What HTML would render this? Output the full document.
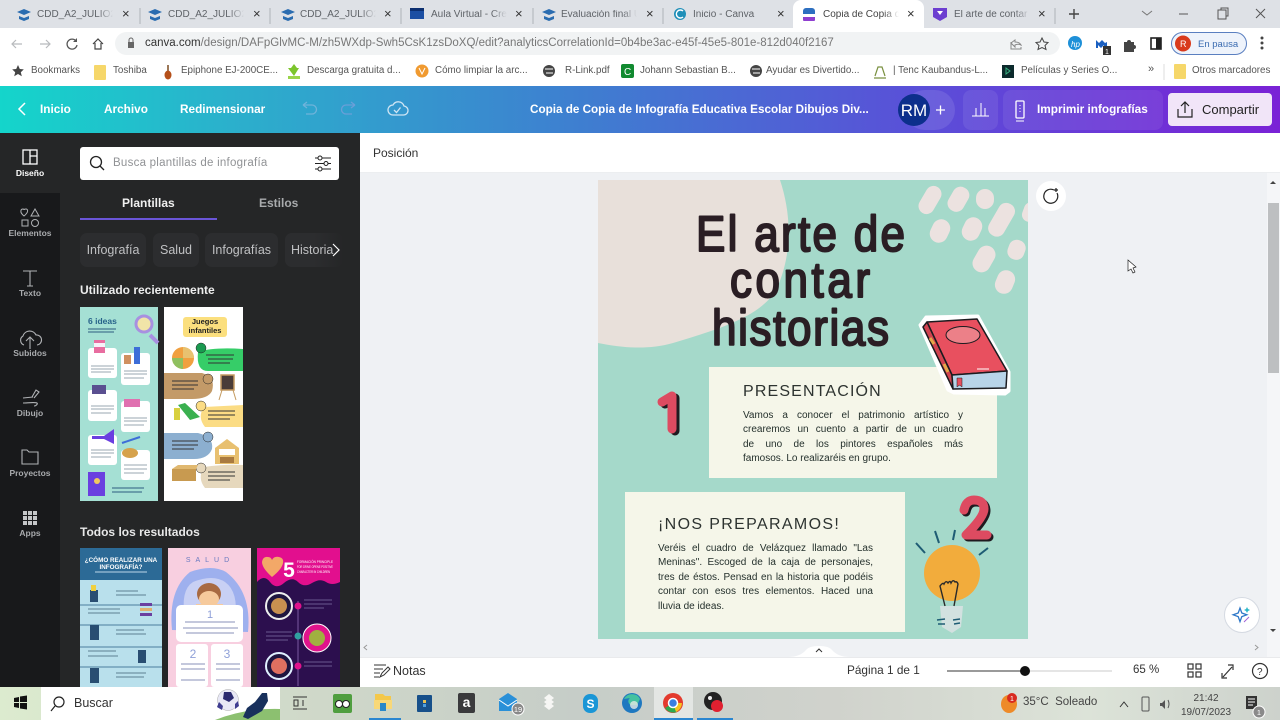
<!DOCTYPE html>
<html lang="es"><head><meta charset="utf-8"><title>Copia de Copia</title>
<style>
*{box-sizing:border-box}
html,body{margin:0;padding:0;width:1280px;height:720px;overflow:hidden;background:#fff;font-family:"Liberation Sans",sans-serif}
.a{position:absolute}
.t{position:absolute;white-space:nowrap;line-height:1}
svg{position:absolute;overflow:visible}
.tab{font-size:10px;color:#5f6368;top:10px;width:76px;overflow:hidden;-webkit-mask-image:linear-gradient(90deg,#000 80%,transparent);mask-image:linear-gradient(90deg,#000 80%,transparent)}
.x{font-size:13px;color:#333;top:7px}
.bm{font-size:9.8px;color:#555;top:66px}
.hd{color:#fff;font-size:11.8px;font-weight:bold;top:104px}
.rl{color:#a9abae;font-size:8.5px;font-weight:bold;width:60px;text-align:center;left:0}
.chip{position:absolute;top:233px;height:34px;border-radius:7px;background:#2c2d2f;color:#c0c1c3;font-size:12.5px;line-height:34px;text-align:center}
.j{position:absolute;color:#24302c;font-size:10px;line-height:14.5px;text-align:justify}
.j span{display:block;white-space:nowrap;text-align:justify;text-align-last:justify;height:14.5px}
.j span.l{text-align-last:left}
</style></head><body>

<!-- chrome tabs -->
<div class="a" style="left:0;top:0;width:1280px;height:28px;background:#dee1e6"></div>
<div class="a" style="left:793px;top:0;width:131px;height:28px;background:#fff;border-radius:8px 8px 0 0"></div>
<svg style="left:0;top:0" width="1280" height="28">
<path d="M140 8v16M270 8v16M401 8v16M533 8v16M663 8v16M1055 8v16" stroke="#aeb2b8"/>
<g fill="#2a6cb0">
<path d="M17 12l7-3 7 3-7 3zM19 16v3l5 2 5-2v-3l-5 2z"/>
<path d="M148 12l7-3 7 3-7 3zM150 16v3l5 2 5-2v-3l-5 2z"/>
<path d="M281 12l7-3 7 3-7 3zM283 16v3l5 2 5-2v-3l-5 2z"/>
<path d="M542 12l7-3 7 3-7 3zM544 16v3l5 2 5-2v-3l-5 2z"/></g>
<rect x="410" y="8" width="14" height="11" fill="#1c4fa3"/><path d="M410 8h14v3h-14z" fill="#0c2f70"/>
<circle cx="680" cy="14" r="6" fill="#1f8fb8"/><path d="M683 11a4 4 0 1 0 0 6" fill="none" stroke="#fff" stroke-width="1.400"/>
<rect x="803" y="8" width="12" height="13" rx="3" fill="#2d6fc0"/><rect x="803" y="14" width="12" height="3" fill="#fff"/><rect x="803" y="17" width="12" height="4" rx="1" fill="#8f3fd0"/>
<path d="M933 8h14v9l-7 4-7-4z" fill="#6d3fd0"/><path d="M937 11l3 4 3-4z" fill="#fff"/>
<path d="M1069 14h10M1074 9v10" stroke="#444" stroke-width="1.400"/>
<path d="M1142 11l5 4 5-4" stroke="#777" fill="none"/>
<path d="M1179 14h9" stroke="#555"/><rect x="1218" y="10" width="8" height="9" fill="none" stroke="#555"/><path d="M1221 10V8h7v8h-2" stroke="#555" fill="none"/>
<path d="M1256 9l9 9M1265 9l-9 9" stroke="#555"/>
</svg>
<span class="t tab" style="left:37px">CDD_A2_JULIO23</span><span class="t x" style="left:122px">×</span>
<span class="t tab" style="left:168px">CDD_A2_JULIO23</span><span class="t x" style="left:253px">×</span>
<span class="t tab" style="left:300px">CDD_A2_JULIO23</span><span class="t x" style="left:384px">×</span>
<span class="t tab" style="left:431px">Aula Virtual - Cre</span><span class="t x" style="left:515px">×</span>
<span class="t tab" style="left:561px">Evaluación final U</span><span class="t x" style="left:646px">×</span>
<span class="t tab" style="left:693px">Inicio - Canva</span><span class="t x" style="left:777px">×</span>
<span class="t tab" style="left:823px;color:#444">Copia de Copia d</span><span class="t x" style="left:907px">×</span>
<span class="t tab" style="left:954px">El arte de contar l</span><span class="t x" style="left:1038px">×</span>

<!-- url bar -->
<div class="a" style="left:0;top:28px;width:1280px;height:58px;background:#fff"></div>
<div class="a" style="left:115px;top:32px;width:945px;height:23px;border-radius:12px;background:#f1f3f4"></div>
<svg style="left:0;top:28px" width="1280" height="30">
<path d="M12 16h10M16 12l-4 4 4 4" stroke="#b8babd" fill="none" stroke-width="1.200"/>
<path d="M40 16h10M46 12l4 4-4 4" stroke="#b8babd" fill="none" stroke-width="1.200"/>
<path d="M76 13a5 5 0 1 0 1 4" stroke="#555" fill="none" stroke-width="1.300"/><path d="M77 10v4h-4" fill="#555"/>
<path d="M93 16l5-5 5 5M95 15v6h6v-6" stroke="#444" fill="none" stroke-width="1.200"/>
<rect x="128" y="14" width="6" height="6" fill="#666"/><path d="M129 14v-2a2 2 0 0 1 4 0v2" stroke="#666" fill="none"/>
<path d="M1011 15l4-3v2c3 0 5 1 6 3-2-1-4-1-6 0v2zM1011 14v7h10v-2" stroke="#888" fill="none"/>
<path d="M1042 10l2 4 4 .5-3 3 1 4-4-2-4 2 1-4-3-3 4-.5z" stroke="#444" fill="none"/>
<circle cx="1075" cy="15" r="7" fill="#1e90d8"/><text x="1071" y="19" font-size="8" font-style="italic" fill="#fff" font-family="Liberation Sans">hp</text>
<path d="M1096 20v-8l3 3 3-3 3 3 2-1v6h-3v-3l-3 3-3-3v3z" fill="#1a5fc0"/><rect x="1103" y="18" width="8" height="9" fill="#333"/><text x="1105" y="26" font-size="7" fill="#fff" font-family="Liberation Sans">1</text>
<path d="M1124 14h3a2 2 0 0 1 4 0h3v3a2 2 0 0 1 0 4v3h-10z" fill="#444"/>
<rect x="1151" y="10" width="10" height="11" fill="none" stroke="#222" stroke-width="1.600"/><rect x="1156" y="10" width="5" height="11" fill="#222"/>
<rect x="1171.500" y="4.500" width="75" height="22" rx="11" fill="#eef3fb" stroke="#5a7fc0"/>
<circle cx="1183" cy="15.500" r="8" fill="#d93a1c"/><text x="1180" y="19" font-size="9" fill="#fff" font-family="Liberation Sans">R</text>
<text x="1198" y="19" font-size="9.500" fill="#3a6bb0" font-family="Liberation Sans">En pausa</text>
<circle cx="1262" cy="10" r="1.500" fill="#444"/><circle cx="1262" cy="15" r="1.500" fill="#444"/><circle cx="1262" cy="20" r="1.500" fill="#444"/>
</svg>
<span class="t" style="left:145px;top:38px;font-size:11.500px;color:#777"><span style="color:#333">canva.com</span>/design/DAFpGlvMC-M/zh5WXdp-Swh5CsK1zsDoXQ/edit?analyticsCorrelationId=0b4be3ac-e45f-45e5-801e-812d040f2167</span>

<!-- bookmarks -->
<svg style="left:0;top:58px" width="1280" height="28">
<path d="M18 7l1.800 4 4 .4-3 2.800 1 4-3.800-2.200-3.800 2.200 1-4-3-2.800 4-.4z" fill="#444"/>
<rect x="94" y="7" width="12" height="15" rx="1" fill="#f6d76a"/>
<path d="M168 7v6" stroke="#7a4a20" stroke-width="1.500"/><ellipse cx="168" cy="17" rx="3.500" ry="4.500" fill="#b5501a"/>
<path d="M294 6l3 4h2l-5 8-6-8h3z" fill="#7cc52c"/><path d="M288 18h12v3h-12z" fill="#9ad54a"/>
<circle cx="422" cy="13" r="6.500" fill="#f09a30"/><path d="M419 10l3 6 3-6" stroke="#fff" fill="none"/>
<circle cx="549" cy="13" r="6" fill="#444"/><path d="M545 11h8M546 15h7" stroke="#fff"/>
<rect x="621" y="6" width="13" height="14" rx="2" fill="#118a30"/><text x="624" y="17" font-size="10" fill="#fff" font-family="Liberation Sans">C</text>
<circle cx="756" cy="13" r="6" fill="#444"/><path d="M752 11h8M753 15h7" stroke="#fff"/>
<path d="M875 18l3-9h4l3 9M874 20h12" stroke="#7a9040" fill="none" stroke-width="1.200"/>
<rect x="1002" y="7" width="12" height="13" fill="#0c2a2c"/><path d="M1006 10l4 3-4 3z" fill="none" stroke="#39b080"/>
<path d="M1164 6v16" stroke="#ddd"/>
<rect x="1174" y="6" width="12" height="15" rx="1" fill="#f6d76a"/>
</svg>
<span class="t bm" style="left:31px">Bookmarks</span><span class="t bm" style="left:113px">Toshiba</span>
<span class="t bm" style="left:181px">Epiphone EJ-200CE...</span><span class="t bm" style="left:307px">Descarga gratuita d...</span>
<span class="t bm" style="left:435px">Cómo limpiar la arc...</span><span class="t bm" style="left:565px">R-Link.pdf</span>
<span class="t bm" style="left:640px">Johann Sebastian B...</span><span class="t bm" style="left:766px">Ayudar es Divertido...</span>
<span class="t bm" style="left:893px">| Tenc Kaubandus-L...</span><span class="t bm" style="left:1021px">Películas y Series O...</span>
<span class="t bm" style="left:1148px;font-size:11px;top:64px">»</span><span class="t bm" style="left:1192px">Otros marcadores</span>

<!-- canva header -->
<div class="a" style="left:0;top:86px;width:1280px;height:47px;background:linear-gradient(90deg,#14d5cb 0%,#2bb0cc 18%,#3e7fd0 45%,#5a4fd8 72%,#7a22d6 100%)"></div>
<svg style="left:0;top:86px" width="1280" height="47">
<path d="M25 17l-6 6 6 6" stroke="#fff" fill="none" stroke-width="1.500"/>
<path d="M303 19l4-3M303 19l4 3M303 19h9a4.500 4.500 0 0 1 0 9h-6" stroke="#6fb3da" fill="none" stroke-width="1.300"/>
<path d="M355 19l-4-3M355 19l-4 3M355 19h-9a4.500 4.500 0 0 0 0 9h6" stroke="#6a9fd8" fill="none" stroke-width="1.300"/>
<path d="M393 29a5 5 0 0 1 0-10 6 6 0 0 1 11 1 4.500 4.500 0 0 1-1 9z" stroke="#cfe5f4" fill="none" stroke-width="1.300"/><path d="M394 24l2.500 2.500 4-5" stroke="#cfe5f4" fill="none" stroke-width="1.300"/>
<rect x="905" y="4" width="50" height="40" rx="20" fill="#fff" opacity=".1"/><rect x="963" y="4" width="35" height="40" rx="8" fill="#fff" opacity=".08"/><rect x="1003" y="4" width="160" height="40" rx="8" fill="#fff" opacity=".07"/>
<circle cx="914" cy="24" r="16" fill="#0c2f8c"/>
<text x="914" y="30" font-size="17" fill="#fff" text-anchor="middle" font-family="Liberation Sans">RM</text>
<path d="M936 24h9M940.500 19.500v9" stroke="#fff" stroke-width="1.300"/>
<path d="M972 30h17M976 30v-8M981 30V17M985 30v-8" stroke="#fff" fill="none"/>
<rect x="1016" y="15" width="8" height="17" rx="1" fill="none" stroke="#fff" stroke-width="1.300"/><path d="M1020 19v1M1020 22v1M1020 25v1M1016 35h8" stroke="#fff"/>
</svg>
<span class="t hd" style="left:40px">Inicio</span><span class="t hd" style="left:104px">Archivo</span><span class="t hd" style="left:180px">Redimensionar</span>
<span class="t hd" style="left:530px;font-size:11.700px">Copia de Copia de Infografía Educativa Escolar Dibujos Div...</span>
<span class="t hd" style="left:1037px">Imprimir infografías</span>
<div class="a" style="left:1168px;top:93px;width:104px;height:33px;border-radius:4px;background:#f1e5f8"></div>
<svg style="left:1176px;top:100px" width="20" height="20"><path d="M2 9v8h14V9M9 13V2M5 6l4-4 4 4" stroke="#222" fill="none" stroke-width="1.200"/></svg>
<span class="t" style="left:1202px;top:103px;font-size:13px;color:#222">Compartir</span>

<!-- left rail + panel -->
<div class="a" style="left:0;top:133px;width:60px;height:554px;background:#18191b"></div>
<div class="a" style="left:60px;top:133px;width:300px;height:554px;background:#252627"></div>
<div class="a" style="left:0;top:133px;width:60px;height:60px;background:#252627"></div>
<svg style="left:0;top:133px" width="60" height="420">
<g stroke="#fff" fill="none" stroke-width="1.300"><rect x="23" y="17" width="14" height="14"/><path d="M30 17v14M30 23h7"/></g>
<g stroke="#b0b2b5" fill="none" stroke-width="1"><path d="M25 85c-5-4-3-7-1-7 1 0 1 1 1 1s0-1 2-1c2 0 3 3-2 7z" transform="translate(-1,-2)"/><path d="M35 76l4 7h-8z"/><rect x="22" y="87" width="6" height="6"/><circle cx="35" cy="90" r="3.500"/></g>
<path d="M23 138h14M30 138v15M27 153h6" stroke="#b0b2b5" fill="none" stroke-width="1.100"/>
<path d="M24 212a5 5 0 0 1-1-9 7 7 0 0 1 13-1 5 5 0 0 1 1 10M30 216v-11M26 208l4-4 4 4" stroke="#b0b2b5" fill="none" stroke-width="1.100"/>
<path d="M23 270c4 0 12-1 14 0 1 1-1 3-3 3M23 265l10-1M32 264l4-7 3 2-5 6" stroke="#b0b2b5" fill="none" stroke-width="1.100"/>
<path d="M22 331v-14h5l2 2h9v12z" stroke="#b0b2b5" fill="none" stroke-width="1.100"/>
<g fill="#c4c6c8"><rect x="23" y="378" width="4" height="4"/><rect x="28" y="378" width="4" height="4"/><rect x="33" y="378" width="4" height="4"/><rect x="23" y="383" width="4" height="4"/><rect x="28" y="383" width="4" height="4"/><rect x="33" y="383" width="4" height="4"/><rect x="23" y="388" width="4" height="4"/><rect x="28" y="388" width="4" height="4"/><rect x="33" y="388" width="4" height="4"/></g>
</svg>
<span class="t rl" style="top:169px;color:#fff">Diseño</span><span class="t rl" style="top:229px">Elementos</span><span class="t rl" style="top:289px">Texto</span><span class="t rl" style="top:349px">Subidos</span><span class="t rl" style="top:409px">Dibujo</span><span class="t rl" style="top:469px">Proyectos</span><span class="t rl" style="top:529px">Apps</span>

<div class="a" style="left:80px;top:147px;width:259px;height:33px;border-radius:3px;background:#fff"></div>
<svg style="left:89px;top:155px" width="20" height="20"><circle cx="7" cy="7" r="5.500" stroke="#222" fill="none" stroke-width="1.300"/><path d="M11 11l4 4" stroke="#222" stroke-width="1.300"/></svg>
<span class="t" style="left:113px;top:158px;font-size:11.500px;color:#909295;letter-spacing:.25px">Busca plantillas de infografía</span>
<svg style="left:314px;top:155px" width="18" height="18"><path d="M1 3h16M1 8.500h16M1 14h16" stroke="#222"/><circle cx="6" cy="3" r="2" fill="#fff" stroke="#222"/><circle cx="12" cy="8.500" r="2" fill="#fff" stroke="#222"/><circle cx="6" cy="14" r="2" fill="#fff" stroke="#222"/></svg>
<span class="t" style="left:122px;top:197px;font-size:12px;font-weight:bold;color:#f0f0f0">Plantillas</span>
<span class="t" style="left:259px;top:197px;font-size:12px;font-weight:bold;color:#a9abad">Estilos</span>
<div class="a" style="left:80px;top:218px;width:137px;height:2px;background:#6a55d8"></div>
<div class="chip" style="left:80px;width:66px">Infografía</div>
<div class="chip" style="left:153px;width:46px">Salud</div>
<div class="chip" style="left:205px;width:73px">Infografías</div>
<div class="chip" style="left:285px;width:58px;text-align:left;padding-left:6px;overflow:hidden;background:linear-gradient(90deg,#2c2d2f 50%,#252627)">Historia</div>
<svg style="left:331px;top:243px" width="10" height="14"><path d="M2 1l6 6-6 6" stroke="#fff" fill="none" stroke-width="1.200"/></svg>
<span class="t" style="left:80px;top:284px;font-size:12px;font-weight:bold;color:#eee">Utilizado recientemente</span>

<!-- thumbs recent -->
<svg style="left:0;top:0" width="360" height="720">
<rect x="80" y="307" width="78" height="194" fill="#a5e0d4"/>
<text x="88" y="324" font-size="8.500" font-weight="bold" fill="#27628a" font-family="Liberation Sans">6 ideas</text>
<path d="M88 329h28M88 332h26" stroke="#2d5d80" stroke-width="1"/>
<path d="M150 335l8 8" stroke="#a890e0" stroke-width="4"/>
<circle cx="144" cy="324" r="8" fill="#f1e4a8" stroke="#a890e0" stroke-width="3"/>
<g fill="#fff"><rect x="88" y="348" width="29" height="30" rx="3"/><rect x="121" y="353" width="29" height="32" rx="3"/><rect x="88" y="390" width="29" height="31" rx="3"/><rect x="121" y="401" width="29" height="31" rx="3"/><rect x="88" y="435" width="29" height="30" rx="3"/><rect x="121" y="450" width="29" height="30" rx="3"/></g>
<rect x="94" y="340" width="11" height="13" fill="#e86da0"/><rect x="94" y="343" width="11" height="4" fill="#f8f0f8"/>
<rect x="124" y="355" width="7" height="9" fill="#d09060"/><rect x="134" y="347" width="6" height="17" fill="#3d6ed8"/>
<rect x="92" y="385" width="14" height="9" fill="#5a4f90"/><rect x="124" y="399" width="16" height="8" fill="#e070b0"/>
<path d="M92 436h12l10-7v15l-10-5H92z" fill="#6a3fe0"/>
<path d="M122 443l18-6" stroke="#3d6ed8" stroke-width="2"/><ellipse cx="130" cy="453" rx="8" ry="5" fill="#d6a24c"/>
<rect x="88" y="472" width="17" height="24" fill="#6a3fe0"/><circle cx="97" cy="481" r="3" fill="#f0c860"/>
<path d="M112 488h32M112 492h30" stroke="#2d5d80"/>
<g stroke="#9aa7b0" stroke-width="1"><path d="M91 366h23M91 369h23M91 372h20M124 371h23M124 374h23M124 378h20M91 406h23M91 409h23M91 413h20M124 418h23M124 421h23M124 425h20M91 450h23M91 453h23M91 457h20M124 465h23M124 469h23M124 473h20"/></g>

<rect x="164" y="307" width="79" height="194" fill="#fff"/>
<rect x="183" y="317" width="44" height="20" rx="3" fill="#fbdf7e"/>
<text x="205" y="324" font-size="7.500" text-anchor="middle" font-weight="bold" fill="#222" font-family="Liberation Sans">Juegos</text>
<text x="205" y="333" font-size="7.500" text-anchor="middle" font-weight="bold" fill="#222" font-family="Liberation Sans">infantiles</text>
<path d="M198 352q15-5 45-3v22h-35q-12 0-10-19z" fill="#36cd68"/>
<path d="M164 373h38q14 4 10 18-4 8-20 8h-28z" fill="#c39a68"/>
<path d="M204 407l39-2v22h-38q-8-10-1-20z" fill="#fbdc84"/>
<path d="M164 433h34q16 4 14 16-4 10-18 10h-30z" fill="#8cafd0"/>
<path d="M204 467q20-3 39-2v23h-38q-8-10-1-21z" fill="#e6d8bd"/>
<circle cx="183" cy="358" r="11" fill="#f0a040"/><path d="M183 347a11 11 0 0 1 11 11l-11 0z" fill="#e8c270"/><path d="M172 358a11 11 0 0 0 11 11v-11z" fill="#8fc060"/>
<circle cx="201" cy="348" r="5" fill="#1a9a50" stroke="#222" stroke-width=".5"/><circle cx="208" cy="379" r="5" fill="#c39a68" stroke="#222" stroke-width=".5"/><circle cx="201" cy="406" r="5" fill="#fbdc84" stroke="#222" stroke-width=".5"/><circle cx="208" cy="437" r="5" fill="#8cafd0" stroke="#222" stroke-width=".5"/><circle cx="201" cy="468" r="5" fill="#e6d8bd" stroke="#222" stroke-width=".5"/>
<rect x="221" y="375" width="13" height="15" fill="#4a3c38" stroke="#c49a60" stroke-width="1.500"/><path d="M219 400l3-10M236 400l-3-10" stroke="#c49a60"/>
<path d="M178 405l7-2 15 14-10 3z" fill="#3ab050"/><rect x="174" y="408" width="6" height="12" fill="#d8d040"/>
<path d="M215 448l12-9 12 9v16h-24z" fill="#e8c070"/><rect x="219" y="449" width="16" height="6" fill="#fff"/><rect x="220" y="457" width="14" height="6" fill="#a97a40"/>
<path d="M172 469h24v12h-24z" fill="#c89a50"/><path d="M172 469l6-4h20l-2 4z" fill="#e0b870"/>
<g stroke="#333" stroke-width="1"><path d="M206 355h28M208 359h25M208 363h22M172 381h26M172 385h26M172 389h22M208 411h27M208 415h27M208 419h22M172 441h26M172 445h26M172 449h22M208 472h27M208 476h27M208 480h22"/></g>

<!-- results -->
<rect x="80" y="548" width="82" height="139" fill="#b9e0ec"/><rect x="80" y="548" width="82" height="32" fill="#2c6a96"/>
<text x="121" y="562" font-size="6.300" font-weight="bold" fill="#fff" text-anchor="middle" font-family="Liberation Sans">¿CÓMO REALIZAR UNA</text>
<text x="121" y="569" font-size="6.300" font-weight="bold" fill="#fff" text-anchor="middle" font-family="Liberation Sans">INFOGRAFÍA?</text>
<path d="M95 572h52" stroke="#bcd6e8"/>
<g stroke="#4a7e9e"><path d="M80 605h82M80 625h82M80 647h82M80 667h82"/></g>
<g fill="#294e72"><rect x="90" y="590" width="8" height="12"/><rect x="90" y="625" width="9" height="15"/><rect x="90" y="668" width="9" height="15"/><rect x="138" y="650" width="8" height="13"/></g>
<rect x="140" y="603" width="12" height="3" fill="#6a3fa0"/><rect x="140" y="608" width="12" height="3" fill="#e0b070"/><rect x="140" y="613" width="12" height="3" fill="#6a3fa0"/>
<path d="M91 585h5v6h-5z" fill="#f0d040"/>
<g stroke="#5d7f92"><path d="M116 591h22M116 595h30M88 609h32M88 613h32M116 630h28M116 634h30M88 651h28M88 656h30M116 673h30M116 677h28"/></g>

<rect x="168" y="548" width="83" height="139" fill="#f8cfe0"/>
<text x="210" y="562" font-size="7" fill="#6a7ac0" text-anchor="middle" letter-spacing="5" font-family="Liberation Sans">SALUD</text>
<path d="M172 630q-4-40 18-58 22-8 36 0 26 20 22 60z" fill="#9eb0ee"/>
<path d="M185 620q-5-30 8-38 20-8 32 0 14 10 10 38z" fill="#c8d0f4"/>
<ellipse cx="209" cy="594" rx="12" ry="11" fill="#a86a42"/><ellipse cx="209" cy="599" rx="10" ry="8" fill="#f6ca9c"/><rect x="196" y="604" width="27" height="4" fill="#f6ca9c"/>
<rect x="176" y="605" width="67" height="37" rx="5" fill="#fff"/><rect x="176" y="644" width="32" height="43" rx="3" fill="#fff"/><rect x="211" y="644" width="32" height="43" rx="3" fill="#fff"/>
<text x="210" y="618" font-size="11" fill="#8fa0d8" text-anchor="middle" font-family="Liberation Sans">1</text>
<text x="193" y="658" font-size="12" fill="#8fa0d8" text-anchor="middle" font-family="Liberation Sans">2</text>
<text x="227" y="658" font-size="12" fill="#8fa0d8" text-anchor="middle" font-family="Liberation Sans">3</text>
<g stroke="#8a90b8"><path d="M185 622h50M183 628h55M186 633h48M181 664h24M181 669h24M216 664h24M216 669h24M181 680h24M216 680h24"/></g>

<rect x="257" y="548" width="83" height="139" fill="#2c0f4e"/>
<path d="M257 548h83v34q-8 4-14 0t-14 1-14-1-14 1-14-1-13 0z" fill="#e20f8e"/>
<path d="M272 577Q262 568 262 562Q263 556 268 557Q271 557 272 560Q274 556 279 557Q284 558 283 563Q282 569 272 577Z" fill="#f3a868"/>
<text x="289" y="577" font-size="21" font-weight="bold" fill="#fff" text-anchor="middle" font-family="Liberation Sans">5</text>
<text x="297" y="563" font-size="4" fill="#fff" font-family="Liberation Sans" textLength="36" lengthAdjust="spacingAndGlyphs">FORMACIÓN PRINCIPLE</text>
<text x="297" y="568" font-size="4" fill="#fff" font-family="Liberation Sans" textLength="36" lengthAdjust="spacingAndGlyphs">FOR DRIVE OPENE POSITIVE</text>
<text x="297" y="573" font-size="4" fill="#fff" font-family="Liberation Sans" textLength="33" lengthAdjust="spacingAndGlyphs">CHARACTER IN CHILDREN</text>
<path d="M298 601v85" stroke="#7a5aa0"/>
<circle cx="279" cy="606" r="13" fill="#1f1540" stroke="#eee" stroke-width="2"/><circle cx="279" cy="606" r="8" fill="#c89050"/>
<circle cx="317" cy="638" r="14" fill="#e0138c" stroke="#fff" stroke-width="1"/><circle cx="317" cy="638" r="8" fill="#a0b040"/>
<circle cx="279" cy="666" r="13" fill="#1f1540" stroke="#e0f0ff" stroke-width="2"/><circle cx="279" cy="666" r="8" fill="#e07060"/>
<circle cx="298" cy="606" r="3.500" fill="#e0138c"/><circle cx="298" cy="636" r="3.500" fill="#30a0a0"/><circle cx="298" cy="666" r="3.500" fill="#e0138c"/>
<g stroke="#6a5a90"><path d="M304 600h28M304 604h28M304 608h20M266 632h26M266 636h26M266 640h22M304 662h28M304 666h28"/></g>
</svg>
<span class="t" style="left:80px;top:526px;font-size:12px;font-weight:bold;color:#e8e8e8">Todos los resultados</span>

<!-- collapse handle -->
<svg style="left:359px;top:380px" width="12" height="60"><path d="M0 0q0 8 6 12 5 4 5 10v18q0 6-5 9-6 4-6 11z" fill="#252627"/><path d="M6.500 26l-3 3 3 3" stroke="#bbb" fill="none"/></svg>

<!-- position bar -->
<div class="a" style="left:360px;top:133px;width:920px;height:40px;background:#fff;border-bottom:1px solid #eceef0"></div>
<span class="t" style="left:373px;top:147px;font-size:12px;color:#333">Posición</span>

<!-- canvas bg -->
<div class="a" style="left:360px;top:173px;width:920px;height:484px;background:#eff1f4"></div>
<div class="a" style="left:598px;top:180px;width:430px;height:459px;background:#a5d9ca"></div>
<svg style="left:598px;top:180px;overflow:hidden" width="430" height="459">
<path d="M0 0H182C192 30 196 70 179 108C165 135 125 148 75 163C50 170 25 168 0 163Z" fill="#e8e0da"/>
<g fill="#ece2e0"><rect x="-8" y="-15" width="16" height="30" rx="8" transform="translate(332,20) rotate(30)"/><rect x="-8" y="-13" width="17" height="26" rx="8" transform="translate(360,19) rotate(30)"/><rect x="-9" y="-10" width="18" height="20" rx="9" transform="translate(387,19)"/><rect x="-9" y="-18" width="17" height="36" rx="8" transform="translate(404,40) rotate(30)"/><rect x="-9" y="-12" width="18" height="24" rx="9" transform="translate(342,51) rotate(25)"/><rect x="-9" y="-12" width="18" height="24" rx="9" transform="translate(374,49) rotate(25)"/><rect x="-9" y="-14" width="18" height="28" rx="9" transform="translate(386,79) rotate(30)"/><rect x="-9" y="-10" width="17" height="20" rx="8" transform="translate(419,70) rotate(20)"/><rect x="-9" y="-12" width="18" height="24" rx="9" transform="translate(407,102) rotate(22)"/><rect x="-7" y="-10" width="14" height="20" rx="7" transform="translate(432,32) rotate(20)"/></g>
</svg>

<div class="a" style="left:709px;top:367px;width:288px;height:111px;background:#f5f6e9"></div>
<div class="a" style="left:625px;top:492px;width:280px;height:140px;background:#f5f6e9"></div>
<span class="t" style="left:743px;top:384px;font-size:16px;letter-spacing:1.150px;color:#2d3330">PRESENTACIÓN</span>
<div class="j" style="left:743px;top:408.500px;width:220px">
<span>Vamos a conocer el patrimonio artístico y</span><span>crearemos un cuento a partir de un cuadro</span><span>de uno de los pintores españoles más</span><span class="l">famosos. Lo realizaréis en grupo.</span></div>
<span class="t" style="left:658px;top:517px;font-size:16px;letter-spacing:1.350px;color:#2d3330">¡NOS PREPARAMOS!</span>
<div class="j" style="left:658px;top:541.500px;width:215px;line-height:14.300px">
<span>Veréis el cuadro de Velázquez llamado "Las</span><span>Meninas". Escoged de la caja de personajes,</span><span>tres de éstos. Pensad en la historia que podéis</span><span>contar con esos tres elementos. Haced una</span><span class="l">lluvia de ideas.</span></div>

<svg style="left:0;top:0" width="1280" height="720">
<!-- title -->
<g font-family="Liberation Sans" font-size="44" fill="#2a1e24" stroke="#2a1e24" stroke-width="1.800" stroke-linejoin="round" stroke-linecap="round">
<text transform="translate(696 251) scale(1 1.140)" x="0" y="0" textLength="209" lengthAdjust="spacing">El arte de</text>
<text transform="translate(730 297) scale(1 1.140)" x="0" y="0" textLength="140" lengthAdjust="spacing">contar</text>
<text transform="translate(712 345) scale(1 1.140)" x="0" y="0" textLength="177" lengthAdjust="spacing">historias</text>
</g>
<!-- book -->
<path d="M920 325L926 317L978 316L1009 372L1009 391L1005 394L954 393L948 390Z" fill="#fff" stroke="#fff" stroke-width="3" stroke-linejoin="round"/>
<path d="M927 322L977 319L1007 371L952 375Z" fill="#e8505f" stroke="#1b1b1f" stroke-width="1.500" stroke-linejoin="round"/>
<path d="M923 327L927 322L952 375L953 389Z" fill="#d14350" stroke="#1b1b1f" stroke-width="1.500" stroke-linejoin="round"/>
<path d="M930 338l4 6M944 364l4 8" stroke="#e4a848" stroke-width="3"/>
<ellipse cx="963" cy="335" rx="17" ry="8.500" fill="#ec8088" stroke="#1b1b1f" stroke-width="1"/>
<path d="M952 375L1007 371L1006 388L953 389Z" fill="#b8d4e8" stroke="#1b1b1f" stroke-width="1.500" stroke-linejoin="round"/>
<path d="M957 378h5v9l-2.500-2-2.500 2z" fill="#e8505f" stroke="#1b1b1f" stroke-width=".5"/>
<path d="M977 369h12" stroke="#fff"/>

<!-- 1 -->
<g fill="none" stroke-width="9" stroke-linecap="round" stroke-linejoin="round">
<path d="M665 404L675 398V431" stroke="#1f1a20"/>
<path d="M662 402L672 396V429" stroke="#dd4b61"/>
<!-- 2 -->
<path d="M966 512Q968 502 976 502Q986 502 986 511Q986 519 968 537H989" stroke="#1f1a20"/>
<path d="M964 510Q966 500 974 500Q984 500 984 509Q984 517 966 535H987" stroke="#dd4b61"/>
</g>
<!-- bulb -->
<g stroke="#1e5c74" stroke-width="2" fill="none"><path d="M916 543l9 10M935 531l4 12M955 530l-2 10M988 548l-9 7"/></g>
<circle cx="952" cy="573" r="28" fill="#f2ac3c"/>
<path d="M940 606h23l-2 21-9 6-10-6z" fill="#d2e1e0"/>
<path d="M945 606l-5-20q3-4 4-2 2-4 4-1 2-3 3 0 2-4 4-1 2-1 3 2l-4 22" stroke="#2a2a2a" stroke-width="1.400" fill="none"/>
<path d="M937 620l8-1M953 620l7-1M938 624l7 0M954 624l6-1" stroke="#1e5c74" stroke-width="1.400"/>
<!-- rotate btn -->
<circle cx="1051" cy="196" r="15" fill="#fff"/>
<path d="M1057 193a7 7 0 1 1-3-3M1054 190h4M1056 188v4" stroke="#222" fill="none" stroke-width="1.200"/>
<!-- cursor -->
<path d="M1128 260v11l3-2 2 4 2-1-2-4 3-1z" fill="#fff" stroke="#222" stroke-width=".7"/>
<!-- scrollbar -->
<rect x="1267" y="173" width="13" height="484" fill="#f5f6f8"/>
<rect x="1268" y="203" width="11" height="170" fill="#bdbfc1"/>
<path d="M1270 184l3-3 3 3" fill="#444"/><path d="M1270 629l3 3 3-3" fill="#444"/>
<path d="M367 645l-3 2.500 3 2.500M1255 645l3 2.500-3 2.500" stroke="#999" fill="none"/>
<!-- magic button -->
<circle cx="1242" cy="615" r="17.500" fill="#fff" stroke="#d5dae2"/>
<path d="M1240 608l1.800 5 5 1.800-5 1.800-1.800 5-1.800-5-5-1.800 5-1.800z" fill="none" stroke="#2d77c8" stroke-width="1.300"/>
<path d="M1247 607l1 2 2 1-2 1-1 2-1-2-2-1 2-1z" fill="#2db8c8"/>
<path d="M1249 617l-5 5" stroke="#a060d8"/>
<!-- pager tab -->
<path d="M788 657q12 0 18-7 3-4 13-4t13 4q6 7 18 7z" fill="#fff"/>
<path d="M816 652l3-3 3 3" stroke="#333" fill="none"/>
</svg>

<!-- footer -->
<div class="a" style="left:360px;top:657px;width:920px;height:30px;background:#fff;border-top:1px solid #e9eaec"></div>
<svg style="left:360px;top:657px" width="920" height="30">
<path d="M14 8h12M14 12h9M14 16h6M14 20h5" stroke="#333" stroke-width="1.100"/><path d="M20 20l2-4 6-6 2 2-6 6z" fill="none" stroke="#333"/>
<path d="M587 14h78" stroke="#9a9a9a" stroke-width="2"/><path d="M665 14h87" stroke="#e5e5e5" stroke-width="2"/>
<circle cx="665" cy="14" r="5" fill="#111"/>
<g fill="none" stroke="#333" stroke-width="1.200"><rect x="828" y="7" width="5" height="5"/><rect x="836" y="7" width="5" height="5"/><rect x="828" y="15" width="5" height="5"/><rect x="836" y="15" width="5" height="5"/><path d="M863 20l9-10M868 8h5v5M862 16v5h5"/><circle cx="900" cy="14" r="7.500"/></g>
<text x="897" y="18" font-size="10" fill="#333" font-family="Liberation Sans">?</text>
</svg>
<span class="t" style="left:393px;top:665px;font-size:12.500px;color:#333">Notas</span>
<span class="t" style="left:847px;top:665px;font-size:11.800px;color:#333">Página 1 de 1</span>
<span class="t" style="left:1133px;top:665px;font-size:11.500px;color:#333">65 %</span>

<!-- taskbar -->
<div class="a" style="left:0;top:687px;width:1280px;height:33px;background:linear-gradient(90deg,#dcebcf 0%,#cfd8c9 25%,#c6cdc8 45%,#d0d2cc 65%,#dce3d8 85%,#cdd2cc 100%)"></div>
<div class="a" style="left:41px;top:687px;width:239px;height:33px;background:#fff"></div>
<div class="a" style="left:654px;top:687px;width:39px;height:33px;background:#e3e6e3"></div>
<svg style="left:0;top:687px" width="1280" height="33">
<g fill="#111"><path d="M14 11l5-1v5h-5zM20 9.500l7-1V15h-7zM14 16h5v5l-5-1zM20 16h7v6.500l-7-1z"/></g>
<circle cx="59" cy="15" r="5" fill="none" stroke="#222" stroke-width="1.200"/><path d="M55 19l-4 5" stroke="#222" stroke-width="1.200"/>
<path d="M215 33q30-12 65-11v11z" fill="#8cc070"/>
<circle cx="228" cy="13" r="10.500" fill="#e8e8f6" stroke="#aaa" stroke-width=".5"/><path d="M224 5l7 0 3 6-5 4-6-3z" fill="#2b2a70"/><path d="M219 15l4 4-1 4-5-3zM235 17l3-3 1 5-4 3z" fill="#3f3d90"/>
<path d="M243 30l4-9 8-6 7-9 5 0 1 8-6 10-14 8z" fill="#18305c"/>
<g fill="none" stroke="#333"><path d="M293 10h14M293 22h14M294 13v6h4v-6zM303 13v6"/></g>
<rect x="333" y="7" width="19" height="19" rx="2" fill="#4f9e3f"/><circle cx="339" cy="17" r="3.500" fill="#fff" stroke="#222"/><circle cx="346" cy="17" r="3.500" fill="#fff" stroke="#222"/>
<path d="M375 7h8l2 2h6v5h-16z" fill="#f4c84a"/><path d="M374 13h18v9h-18z" fill="#f8d878"/><rect x="380" y="16" width="6" height="8" fill="#2a88c8"/>
<rect x="417" y="8" width="15" height="17" rx="1" fill="#17508a"/><rect x="423" y="13" width="3" height="3" fill="#e8c050"/><rect x="423" y="17" width="3" height="3" fill="#50a0e0"/>
<rect x="458" y="6" width="17" height="20" rx="2" fill="#3a3a3c"/><text x="466.500" y="20" font-size="14" font-weight="bold" text-anchor="middle" fill="#fff" font-family="Liberation Sans">a</text>
<path d="M499 12l9-6 9 6v12h-18z" fill="#2a90d8"/><path d="M499 13l9 6 9-6" stroke="#fff" fill="none"/><circle cx="518" cy="22" r="6" fill="#888" stroke="#fff"/><text x="518" y="25" font-size="7.500" text-anchor="middle" fill="#fff" font-family="Liberation Sans">19</text>
<path d="M549 7l-5 4 5 4-5 4 5 4 5-4-5-4 5-4z" fill="#f6f6f4"/><path d="M544 15l5-4 5 4-5 4z" fill="#f6f6f4"/>
<rect x="583" y="7" width="15" height="19" rx="7" fill="#1a96d6"/><text x="590.500" y="21" font-size="12" font-weight="bold" text-anchor="middle" fill="#fff" font-family="Liberation Sans">S</text>
<circle cx="632" cy="16" r="10" fill="#1e78c0"/><path d="M624 12a9 9 0 0 1 16 0l-3 6h-6a4 4 0 0 1-1-7z" fill="#44c2a0"/><circle cx="634" cy="18" r="4" fill="#e3e8e3" opacity=".8"/>
<circle cx="673" cy="16" r="10" fill="#e33b2e"/><path d="M673 16l-8 5a10 10 0 0 0 12 4z" fill="#2fa84f"/><path d="M673 16h9a10 10 0 0 1-6 9z" fill="#f6c320"/><circle cx="673" cy="16" r="4.500" fill="#3a7ee0" stroke="#fff" stroke-width="1.500"/>
<circle cx="713" cy="14" r="9" fill="#222"/><circle cx="717" cy="19" r="6" fill="#e02030"/><circle cx="710" cy="11" r="2" fill="#eee"/>
<g fill="#2a86d0"><rect x="369" y="31" width="32" height="2"/><rect x="654" y="31" width="39" height="2"/><rect x="697" y="31" width="36" height="2"/></g>
<ellipse cx="1009" cy="17" rx="8" ry="9" fill="#ee8a28"/><circle cx="1012" cy="11" r="5" fill="#d82a20"/><text x="1012" y="14" font-size="7" text-anchor="middle" fill="#fff" font-family="Liberation Sans">1</text>
<path d="M1120 20l4-5 4 5" fill="none" stroke="#333"/>
<rect x="1142" y="10" width="7" height="14" rx="1" fill="none" stroke="#555"/><path d="M1165 13v9l-3-3h-2v-3h2z" fill="#555"/><path d="M1168 13q2 4 0 8" stroke="#555" fill="none"/>
<path d="M1246 9h11v13h-11z" fill="#333"/><path d="M1248 12h7M1248 15h7M1248 18h5" stroke="#fff"/><circle cx="1259" cy="25" r="6" fill="#8a8a8a" stroke="#fff"/><text x="1259" y="28" font-size="7.500" text-anchor="middle" fill="#fff" font-family="Liberation Sans">1</text>
</svg>
<span class="t" style="left:74px;top:697px;font-size:12.500px;color:#333">Buscar</span>
<span class="t" style="left:1023px;top:697px;font-size:11.500px;color:#444">35°C&nbsp; Soleado</span>
<span class="t" style="left:1176px;top:692px;font-size:10px;color:#444;width:60px;text-align:center;line-height:14px;white-space:normal">21:42<br>19/07/2023</span>
</body></html>
